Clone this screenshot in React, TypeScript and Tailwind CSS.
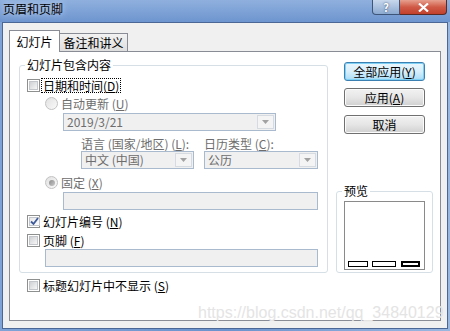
import React from 'react';

const font = { fontFamily: '"Noto Sans CJK SC", "Liberation Sans", sans-serif' };

function Mn({ k }: { k: string }) {
  return (
    <span>
      (<u>{k}</u>)
    </span>
  );
}

function CheckBox({ checked }: { checked?: boolean }) {
  return (
    <span className="w-[13px] h-[13px] border border-[#8e8f8f] bg-white p-[1px] flex shrink-0">
      <span
        className={`flex-1 flex items-center justify-center border border-[#c3c6cb] ${
          checked ? 'bg-gradient-to-br from-[#e9e9e9] to-[#fdfdfd]' : 'bg-gradient-to-br from-[#cfd1d4] to-[#f7f7f7]'
        }`}
      >
        {checked && (
          <svg width="9" height="9" viewBox="0 0 9 9">
            <path d="M1 4.5 L3.5 7 L8 1" stroke="#3d5a9a" strokeWidth="1.8" fill="none" />
          </svg>
        )}
      </span>
    </span>
  );
}

function Radio({ on }: { on?: boolean }) {
  return (
    <span className="w-[13px] h-[13px] rounded-full border border-[#c2c2c2] bg-gradient-to-br from-[#e1e1e1] to-[#fafafa] flex items-center justify-center shrink-0">
      {on && <span className="w-[6px] h-[6px] rounded-full bg-gradient-to-br from-[#8d8d8d] to-[#c9c9c9]" />}
    </span>
  );
}

function Arrow() {
  return (
    <span className="w-[17px] h-full border border-[#d6dbe1] bg-[#f4f4f4] flex items-center justify-center">
      <svg width="7" height="4" viewBox="0 0 7 4">
        <path d="M0 0 H7 L3.5 4 Z" fill="#a2a2a2" />
      </svg>
    </span>
  );
}

function Field({ w, text, arrow }: { w: string; text?: string; arrow?: boolean }) {
  return (
    <div className={`${w} h-[18px] border border-[#a9b9ce] bg-[#f0f0f0] flex items-stretch p-[1px]`}>
      <span className="flex-1 pl-[2px] text-[12px] leading-[14px] text-[#6d6d6d]">{text}</span>
      {arrow && <Arrow />}
    </div>
  );
}

function Btn({ children, primary }: { children: React.ReactNode; primary?: boolean }) {
  return (
    <div
      className={`w-[81px] h-[19px] rounded-[3px] border flex items-center justify-center text-[12px] leading-none text-black ${
        primary
          ? 'border-[#3c7fb1] bg-gradient-to-b from-[#ebf6fd] via-[#d8effb] to-[#a9dbf6] shadow-[inset_0_0_0_1px_#7fd0f5]'
          : 'border-[#707070] bg-gradient-to-b from-[#f2f2f2] via-[#e6e6e6] to-[#d0d0d0] shadow-[inset_0_0_0_1px_#fbfbfb]'
      }`}
    >
      {children}
    </div>
  );
}

export default function App() {
  return (
    <div
      className="w-[450px] h-[331px] overflow-hidden flex flex-col bg-gradient-to-r from-[#7fa3d6] via-[#6c93cd] to-[#9ab7e0] text-[12px] text-black"
      style={font}
    >
      {/* title bar */}
      <div className="h-[22px] flex items-start justify-between bg-gradient-to-b from-[#8fb0de] to-[#6e95cf]">
        <span className="pl-[3px] pt-[2px] leading-[14px] text-[12px] [text-shadow:0_0_6px_#dde8f7]">页眉和页脚</span>
        <div className="flex mr-[3px]">
          <div className="w-[28px] h-[15px] border border-t-0 border-[#3d5578] rounded-bl-[4px] bg-gradient-to-b from-[#c9d8ec] to-[#8ba9d0] flex items-center justify-center text-white font-bold text-[11px] leading-none [text-shadow:0_0_2px_#2d3f5c]">
            ?
          </div>
          <div className="w-[47px] h-[15px] border border-t-0 border-l-0 border-[#5a2a24] rounded-br-[4px] bg-gradient-to-b from-[#e6a08f] via-[#cf5a46] to-[#c2402b] flex items-center justify-center">
            <svg width="11" height="9" viewBox="0 0 11 9">
              <path d="M1 0.5 L10 8.5 M10 0.5 L1 8.5" stroke="#fff" strokeWidth="2.2" />
            </svg>
          </div>
        </div>
      </div>

      {/* body */}
      <div className="mx-[2px] h-[307px] border border-[#4a6796] bg-[#f0f0f0] px-[6px] pt-[7px] flex flex-col">
        {/* tabs */}
        <div className="h-[21px] flex items-end">
          <div className="relative z-10 -mb-px h-[22px] w-[51px] border border-b-0 border-[#898c95] bg-white flex items-center justify-center text-[12px] leading-none">
            幻灯片
          </div>
          <div className="h-[18px] w-[68px] border border-l-0 border-b-0 border-[#898c95] bg-gradient-to-b from-[#f2f2f2] to-[#dedede] flex items-center justify-center text-[12px] leading-none">
            备注和讲义
          </div>
        </div>

        {/* panel */}
        <div className="relative h-[270px] border border-[#898c95] bg-white flex">
          <div className="pl-[9px] flex flex-col">
            <div className="relative mt-[13px] w-[309px] h-[208px] border border-[#d5dfe5] rounded-[3px] flex flex-col">
              <span className="absolute -top-[8px] left-[5px] px-[2px] bg-white leading-[14px]">幻灯片包含内容</span>

              <div className="mt-[12px] h-[15px] pl-[7px] flex items-center">
                <CheckBox />
                <span className="ml-[2px] px-[1px] leading-[13px] outline outline-1 outline-dotted outline-black">
                  日期和时间<Mn k="D" />
                </span>
              </div>

              <div className="mt-[3px] h-[14px] pl-[25px] flex items-center text-[#6d6d6d]">
                <Radio />
                <span className="ml-[3px] leading-[13px]">
                  自动更新 <Mn k="U" />
                </span>
              </div>

              <div className="mt-[3px] pl-[43px] flex">
                <Field w="w-[213px]" text="2019/3/21" arrow />
              </div>

              <div className="mt-[7px] h-[12px] pl-[61px] flex text-[#6d6d6d] leading-[12px]">
                <span className="w-[123px]">
                  语言 (国家/地区) <Mn k="L" />:
                </span>
                <span>
                  日历类型 <Mn k="C" />:
                </span>
              </div>

              <div className="mt-[1px] pl-[61px] flex gap-[10px]">
                <Field w="w-[113px]" text="中文 (中国)" arrow />
                <Field w="w-[114px]" text="公历" arrow />
              </div>

              <div className="mt-[7px] h-[13px] pl-[25px] flex items-center text-[#6d6d6d]">
                <Radio on />
                <span className="ml-[3px] leading-[13px]">
                  固定 <Mn k="X" />
                </span>
              </div>

              <div className="mt-[3px] pl-[43px] flex">
                <Field w="w-[255px]" />
              </div>

              <div className="mt-[5px] h-[13px] pl-[7px] flex items-center">
                <CheckBox checked />
                <span className="ml-[3px] leading-[13px]">
                  幻灯片编号 <Mn k="N" />
                </span>
              </div>

              <div className="mt-[6px] h-[13px] pl-[7px] flex items-center">
                <CheckBox />
                <span className="ml-[3px] leading-[13px]">
                  页脚 <Mn k="F" />
                </span>
              </div>

              <div className="mt-[2px] pl-[25px] flex">
                <Field w="w-[273px]" />
              </div>
            </div>

            <div className="mt-[6px] h-[13px] pl-[8px] flex items-center">
              <CheckBox />
              <span className="ml-[3px] leading-[13px]">
                标题幻灯片中不显示 <Mn k="S" />
              </span>
            </div>
          </div>

          {/* right column */}
          <div className="ml-[8px] w-[97px] flex flex-col">
            <div className="mt-[10px] pl-[8px] flex flex-col">
              <Btn primary>
                全部应用 <Mn k="Y" />
              </Btn>
              <div className="mt-[7px]">
                <Btn>
                  应用 <Mn k="A" />
                </Btn>
              </div>
              <div className="mt-[8px]">
                <Btn>取消</Btn>
              </div>
            </div>

            <div className="relative mt-[57px] h-[82px] w-[97px] border border-[#d5dfe5] rounded-[3px] flex flex-col">
              <span className="absolute -top-[8px] left-[5px] px-[2px] bg-white leading-[14px]">预览</span>
              <div className="mt-[9px] ml-[7px] w-[81px] h-[69px] border border-[#8a8a8a] bg-white flex items-end pl-[3px] pb-[2px]">
                <span className="w-[20px] h-[6px] border border-black" />
                <span className="ml-[4px] w-[24px] h-[6px] border border-black" />
                <span className="ml-[5px] w-[19px] h-[6px] border-2 border-black" />
              </div>
            </div>
          </div>

          {/* watermark */}
          <span
            className="absolute left-[188px] top-[252px] text-[16px] leading-[18px] text-[#e4e4e4] whitespace-nowrap"
            style={{ fontFamily: '"Liberation Sans", Arial, sans-serif' }}
          >
            https://blog.csdn.net/qq_34840129
          </span>
        </div>
      </div>
    </div>
  );
}
